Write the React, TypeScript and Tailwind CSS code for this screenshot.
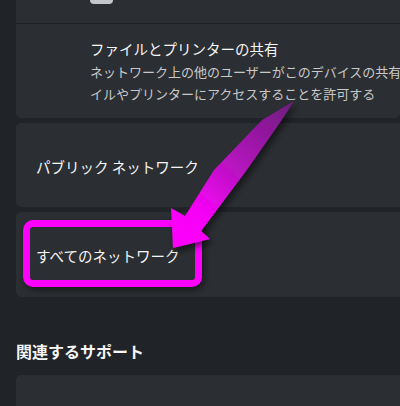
import React from "react";

export default function App() {
  return (
    <div className="relative w-[400px] h-[406px] overflow-hidden bg-[#202327] font-['Noto_Sans_CJK_JP','Noto_Sans',sans-serif] text-white">
      <div className="flex flex-col pl-4">
        {/* top card with two sections */}
        <div className="flex flex-col rounded-b-[5px] overflow-hidden bg-[#2b2e32]">
          <div className="h-[23px] pl-[74px] flex items-start">
            <div className="w-[23px] h-[4px] rounded-b-[4px] bg-[#c3c7cc]" />
          </div>
          <div className="h-px bg-[#1e2124]" />
          <div className="h-[94px] pl-[74px] pt-[15px] flex flex-col whitespace-nowrap">
            <div className="text-[14.5px] leading-[20px] text-[#f5f5f5]">ファイルとプリンターの共有</div>
            <div className="mt-[2px] text-[13px] leading-[22px] text-[#c9c9c9]">ネットワーク上の他のユーザーがこのデバイスの共有ファ</div>
            <div className="text-[13px] leading-[22px] text-[#c9c9c9]">イルやプリンターにアクセスすることを許可する</div>
          </div>
        </div>

        <div className="mt-[5px] h-[84px] rounded-l-[5px] bg-[#2b2e32] pl-5 pt-[34px]">
          <div className="text-[14.5px] leading-[20px] text-[#f5f5f5]">パブリック ネットワーク</div>
        </div>

        <div className="mt-[5px] h-[85px] rounded-l-[5px] bg-[#2b2e32] pl-5 pt-[34px]">
          <div className="text-[14.5px] leading-[20px] text-[#f5f5f5]">すべてのネットワーク</div>
        </div>

        <div className="mt-[42px] text-[16px] leading-[24px] font-semibold text-[#f5f5f5]">関連するサポート</div>

        <div className="mt-[12px] h-[60px] rounded-tl-[5px] bg-[#2b2e32]" />
      </div>

      {/* highlight box annotation */}
      <div className="absolute left-[23px] top-[220px] w-[179px] h-[67px] rounded-[10px] border-[7px] border-[#ff00ff] shadow-[2px_3px_6px_rgba(0,0,0,0.45)]" />

      {/* arrow annotation */}
      <svg className="absolute left-0 top-0" width="400" height="406" viewBox="0 0 400 406">
        <defs>
          <linearGradient id="ag" x1="294" y1="101" x2="173" y2="248" gradientUnits="userSpaceOnUse">
            <stop offset="0" stopColor="#6d1d7c" />
            <stop offset="0.45" stopColor="#b414bd" />
            <stop offset="0.75" stopColor="#f403f4" />
            <stop offset="1" stopColor="#ff00ff" />
          </linearGradient>
          <filter id="sh" x="-20%" y="-20%" width="140%" height="140%">
            <feDropShadow dx="3" dy="4" stdDeviation="3" floodColor="#000" floodOpacity="0.5" />
          </filter>
        </defs>
        <polygon
          points="294,101 281,121 246,171 201,231 210,239 173,248 171,208 185,216 214,170 262,120"
          fill="url(#ag)"
          filter="url(#sh)"
        />
      </svg>
    </div>
  );
}
